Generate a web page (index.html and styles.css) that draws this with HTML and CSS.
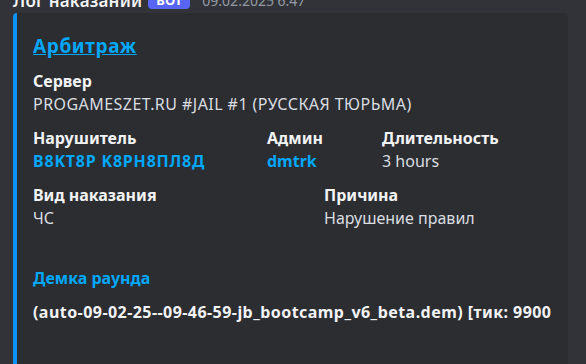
FILE: index.html
```html
<!DOCTYPE html>
<html>
<head>
    <title>Лог наказаний</title>
    <link rel="stylesheet" href="styles.css">
</head>
<body>
    <div class="message">
        <div class="header">
            <span class="author">Лог наказаний</span>
            <span class="bot-tag">BOT</span>
            <span class="timestamp">09.02.2025 6:47</span>
        </div>

        <div class="embed">
            <a class="embed-title" href="#">Арбитраж</a>

            <div class="field">
                <div class="field-name">Сервер</div>
                <div class="field-value caps">PROGAMESZET.RU #JAIL #1 (РУССКАЯ ТЮРЬМА)</div>
            </div>

            <div class="field-row three">
                <div class="field">
                    <div class="field-name">Нарушитель</div>
                    <div class="field-value mention wide">B8KT8P K8PH8ПЛ8Д</div>
                </div>
                <div class="field">
                    <div class="field-name">Админ</div>
                    <div class="field-value mention">dmtrk</div>
                </div>
                <div class="field">
                    <div class="field-name">Длительность</div>
                    <div class="field-value">3 hours</div>
                </div>
            </div>

            <div class="field-row two">
                <div class="field">
                    <div class="field-name">Вид наказания</div>
                    <div class="field-value">ЧС</div>
                </div>
                <div class="field">
                    <div class="field-name">Причина</div>
                    <div class="field-value">Нарушение правил</div>
                </div>
            </div>

            <div class="field demo">
                <div class="field-name blue">Демка раунда</div>
                <div class="field-value bold">(auto-09-02-25--09-46-59-jb_bootcamp_v6_beta.dem) [тик: 9900</div>
            </div>
        </div>
    </div>
</body>
</html>
```

FILE: styles.css
```css
body {
    margin: 0;
    background-color: #313338;
    font-family: "Noto Sans", "Open Sans", sans-serif;
    color: #dbdee1;
    overflow: hidden;
}

.message {
    padding-left: 13px;
}

.header {
    display: flex;
    align-items: center;
    height: 18px;
    margin-top: -9px;
}

.author {
    font-size: 17px;
    font-weight: 600;
    color: #f2f3f5;
    letter-spacing: 0.2px;
}

.bot-tag {
    margin-left: 6px;
    padding: 0 8px;
    height: 18px;
    line-height: 18px;
    font-size: 13px;
    font-weight: 700;
    color: #fff;
    background-color: #5865f2;
    border-radius: 4px;
}

.timestamp {
    margin-left: 12px;
    font-size: 14px;
    color: #949ba4;
}

.embed {
    width: 519px;
    height: 360px;
    margin-top: 4px;
    padding: 21px 16px 0 16px;
    background-color: #2b2d31;
    border-left: 4px solid #0b93f6;
    border-radius: 4px;
}

.embed-title {
    display: block;
    font-size: 19px;
    font-weight: 700;
    line-height: 24px;
    letter-spacing: 0.6px;
    color: #00a8fc;
    margin-bottom: 12px;
}

.field-name {
    font-size: 16px;
    font-weight: 700;
    line-height: 22px;
    color: #f2f3f5;
    margin-bottom: 1px;
}

.field-value {
    font-size: 16px;
    line-height: 22px;
    white-space: nowrap;
}

.field-value.caps {
    letter-spacing: 0.45px;
}

.field-row {
    display: grid;
    column-gap: 8px;
    margin-top: 12px;
}

.field-row.three {
    grid-template-columns: 226px 107px 1fr;
}

.field-row.two {
    grid-template-columns: 283px 1fr;
}

.mention {
    font-weight: 700;
    color: #00a8fc;
}

.mention.wide {
    letter-spacing: 0.8px;
}

.blue {
    color: #00a8fc;
}

.bold {
    font-weight: 700;
    color: #f2f3f5;
    letter-spacing: 0.45px;
}

.demo {
    margin-top: 38px;
}

.demo .field-name {
    margin-bottom: 12px;
}
```
